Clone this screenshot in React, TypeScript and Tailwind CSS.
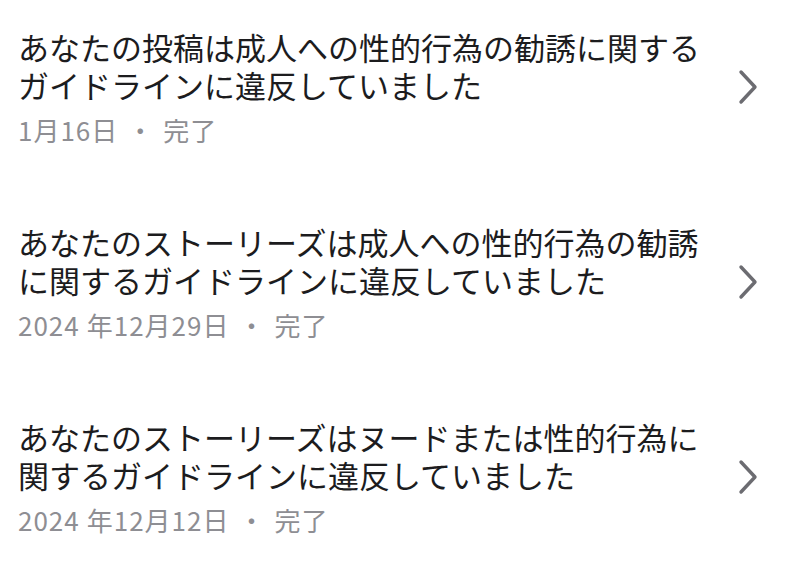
const items = [
  {
    title: 'あなたの投稿は成人への性的行為の勧誘に関するガイドラインに違反していました',
    year: '',
    date: '1月16日',
  },
  {
    title: 'あなたのストーリーズは成人への性的行為の勧誘に関するガイドラインに違反していました',
    year: '2024',
    date: '年12月29日',
  },
  {
    title: 'あなたのストーリーズはヌードまたは性的行為に関するガイドラインに違反していました',
    year: '2024',
    date: '年12月12日',
  },
]

function Chevron() {
  return (
    <svg width="22" height="36" viewBox="0 0 22 36" fill="none" className="shrink-0">
      <polyline
        points="4,3 18,18 4,33"
        stroke="#6c6c71"
        strokeWidth="3.4"
        strokeLinecap="round"
        strokeLinejoin="round"
      />
    </svg>
  )
}

export default function App() {
  return (
    <div
      className="w-[800px] h-[569px] bg-white overflow-hidden"
      style={{ fontFamily: '"Noto Sans CJK JP", "Noto Sans", sans-serif' }}
    >
      {items.map((item, i) => (
        <div key={i} className="flex items-center pl-[18px] pr-[41px] pt-[28px] pb-[50px]">
          <div className="w-[700px] shrink-0">
            <p className="text-[31px] leading-[38px] text-[#1c1c1e]">{item.title}</p>
            <p className="mt-[10px] text-[26px] leading-[31px] text-[#8e8e93] tracking-[1px]">
              {item.year && <span className="mr-[7px]">{item.year}</span>}
              <span>{item.date}</span>
              <span className="mx-[9px]">・</span>
              <span>完了</span>
            </p>
          </div>
          <div className="flex-1" />
          <Chevron />
        </div>
      ))}
    </div>
  )
}
